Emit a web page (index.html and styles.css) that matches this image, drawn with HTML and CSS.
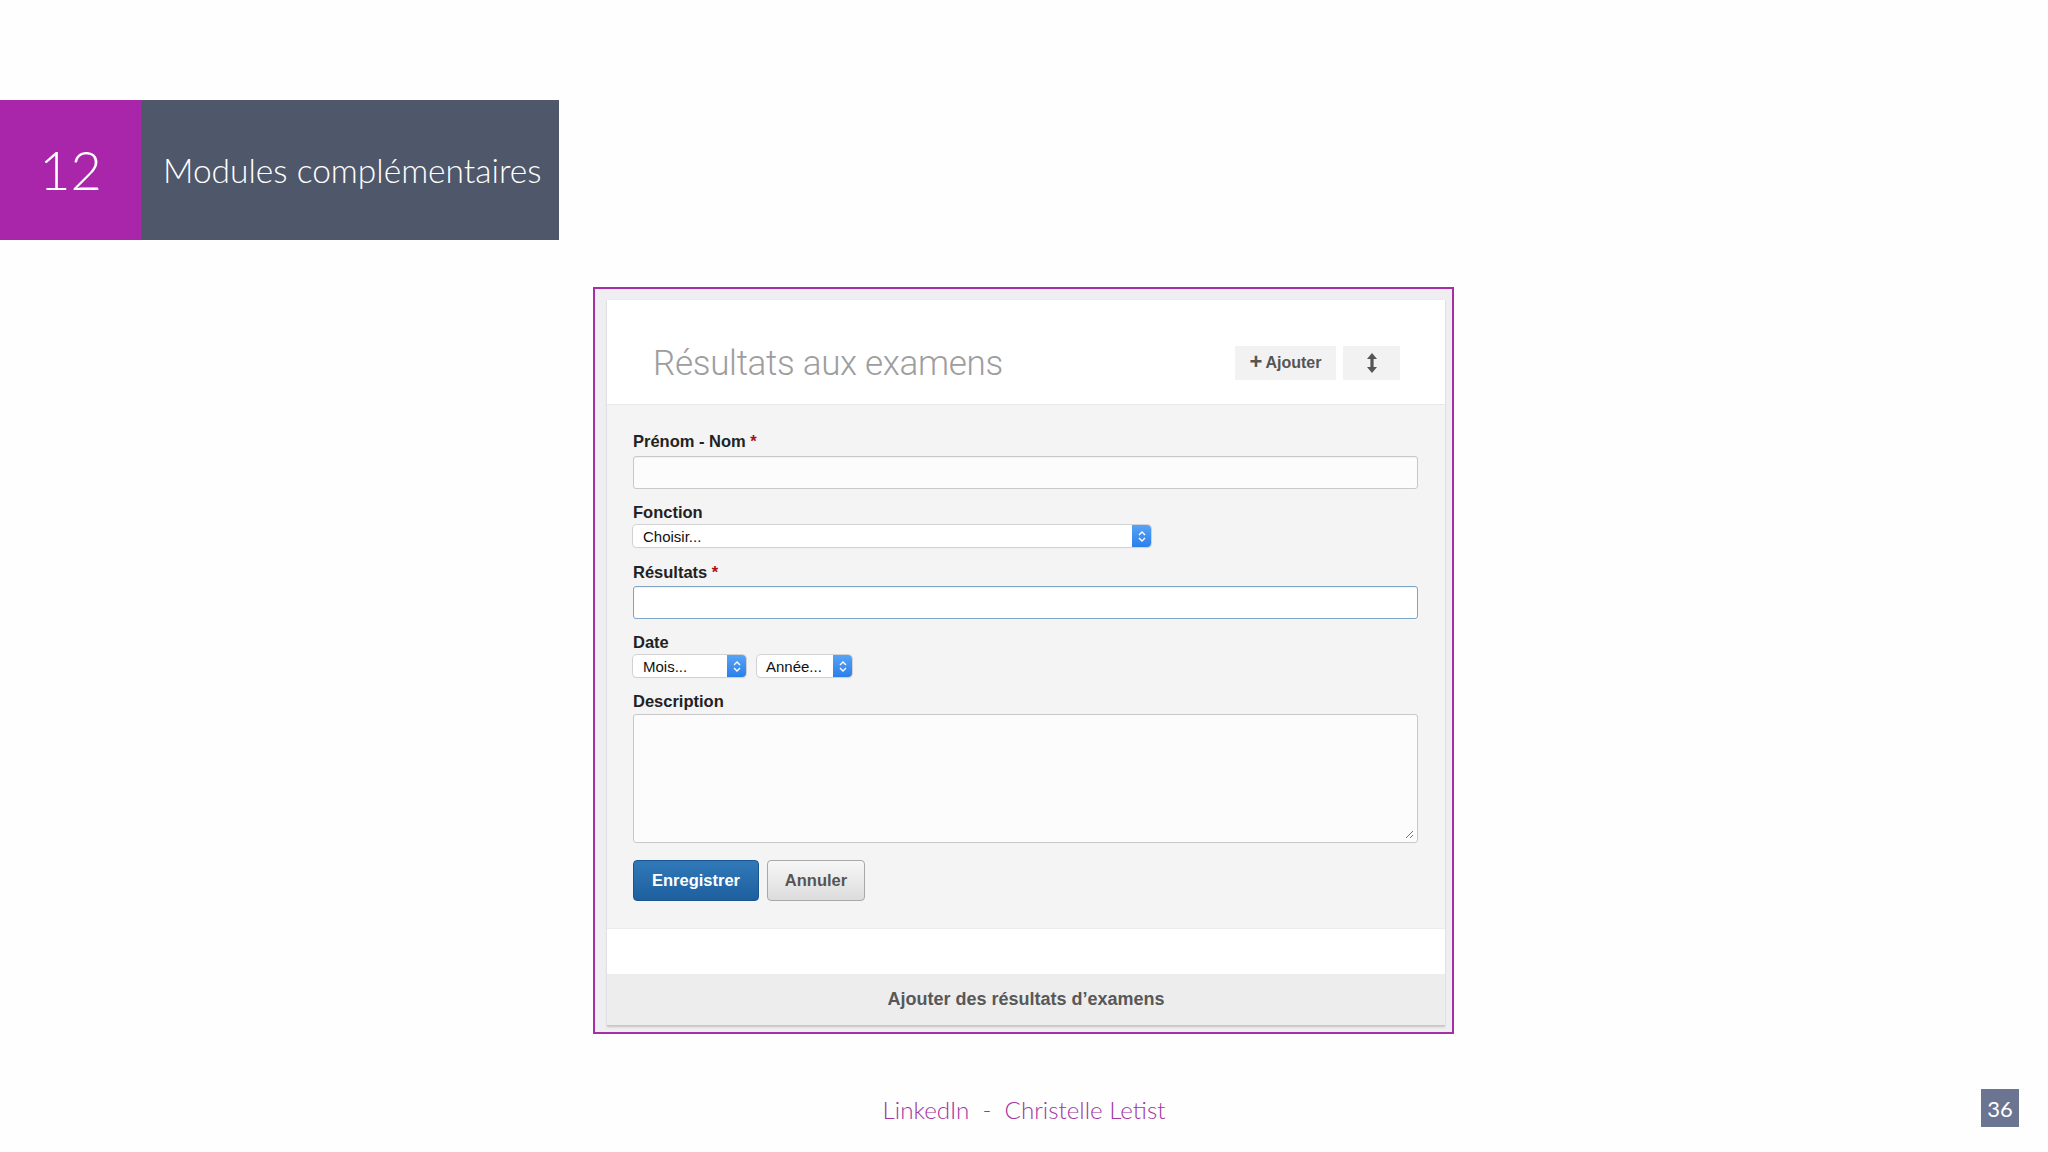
FILE: index.html
```html
<!DOCTYPE html>
<html lang="fr">
<head>
<meta charset="utf-8">
<title>Modules complémentaires</title>
<link rel="stylesheet" href="styles.css">
</head>
<body>
<div class="slide">
  <header class="banner">
    <div class="banner-num">12</div>
    <div class="banner-title">Modules complémentaires</div>
  </header>

  <section class="frame">
    <div class="card">
      <div class="card-head">
        <h2 class="card-title">Résultats aux examens</h2>
        <div class="head-actions">
          <button class="tool-btn add-btn"><span class="plus">+</span>Ajouter</button>
          <button class="tool-btn sort-btn" aria-label="Réorganiser">
            <svg width="12" height="20" viewBox="0 0 12 20"><path d="M6 0 L11 6 H7.6 V14 H11 L6 20 L1 14 H4.4 V6 H1 Z" fill="#555"/></svg>
          </button>
        </div>
      </div>

      <form class="card-form">
        <label class="lbl">Prénom - Nom <span class="req">*</span></label>
        <div class="input"></div>

        <label class="lbl lbl-gap">Fonction</label>
        <div class="select select-wide">
          <span class="select-text">Choisir...</span>
          <span class="select-arrow">
            <svg width="8" height="13" viewBox="0 0 8 13"><path d="M1 5 L4 2 L7 5 M1 8 L4 11 L7 8" fill="none" stroke="#fff" stroke-width="1.4"/></svg>
          </span>
        </div>

        <label class="lbl lbl-gap2">Résultats <span class="req">*</span></label>
        <div class="input input-focus"></div>

        <label class="lbl lbl-gap">Date</label>
        <div class="date-row">
          <div class="select select-mois">
            <span class="select-text">Mois...</span>
            <span class="select-arrow">
              <svg width="8" height="13" viewBox="0 0 8 13"><path d="M1 5 L4 2 L7 5 M1 8 L4 11 L7 8" fill="none" stroke="#fff" stroke-width="1.4"/></svg>
            </span>
          </div>
          <div class="select select-annee">
            <span class="select-text">Année...</span>
            <span class="select-arrow">
              <svg width="8" height="13" viewBox="0 0 8 13"><path d="M1 5 L4 2 L7 5 M1 8 L4 11 L7 8" fill="none" stroke="#fff" stroke-width="1.4"/></svg>
            </span>
          </div>
        </div>

        <label class="lbl lbl-gap3">Description</label>
        <div class="textarea">
          <svg class="grip" width="9" height="9" viewBox="0 0 9 9"><path d="M8 1 L1 8 M8 5 L5 8" stroke="#777" stroke-width="1"/></svg>
        </div>

        <div class="actions">
          <button type="button" class="btn btn-primary">Enregistrer</button>
          <button type="button" class="btn btn-secondary">Annuler</button>
        </div>
      </form>

      <div class="card-spacer"></div>
      <div class="card-foot">Ajouter des résultats d’examens</div>
    </div>
  </section>

  <footer class="slide-foot">
    <div></div>
    <div class="credit">LinkedIn&nbsp; - &nbsp;Christelle Letist</div>
    <div class="page-num">36</div>
  </footer>
</div>
</body>
</html>
```

FILE: styles.css
```css
* { box-sizing: border-box; }

html, body {
  margin: 0;
  padding: 0;
  background: #fefefe;
}

.slide {
  width: 2048px;
  height: 1152px;
  overflow: hidden;
  font-family: "Liberation Sans", Arial, sans-serif;
}

/* Banner */
.banner {
  display: flex;
  margin-top: 100px;
  height: 140px;
  width: 559px;
}

.banner-num {
  width: 141px;
  background: #a925a9;
  color: #fff;
  font-family: Lato, "Noto Sans", sans-serif;
  font-weight: 300;
  font-size: 54px;
  display: flex;
  align-items: center;
  justify-content: center;
  padding-bottom: 2px;
}

.banner-title {
  flex: 1;
  background: #4f576a;
  color: #fff;
  font-family: Lato, "Noto Sans", sans-serif;
  font-weight: 300;
  font-size: 33.5px;
  display: flex;
  align-items: center;
  padding-left: 22px;
}

/* Frame */
.frame {
  margin-top: 47px;
  margin-left: 593px;
  width: 861px;
  height: 747px;
  border: 2px solid #a62fa8;
  background: #efeff1;
  padding: 11px 7px 7px 12px;
}

.card {
  width: 838px;
  background: #fff;
  box-shadow: 0 1px 2px rgba(0,0,0,0.18);
}

.card-head {
  height: 105px;
  display: flex;
  align-items: center;
  justify-content: space-between;
  padding: 22px 45px 0 46px;
  border-bottom: 1px solid #e9e9eb;
}

.card-title {
  margin: 0;
  font-family: Roboto, "Liberation Sans", sans-serif;
  font-weight: 300;
  font-size: 35px;
  color: #9d9d9f;
  letter-spacing: -0.3px;
}

.head-actions {
  display: flex;
  gap: 7px;
}

.tool-btn {
  height: 34px;
  border: none;
  background: #f2f2f3;
  color: #555;
  font-family: "Liberation Sans", Arial, sans-serif;
  font-weight: bold;
  font-size: 16px;
  display: flex;
  align-items: center;
  justify-content: center;
  padding: 0;
}

.add-btn {
  width: 101px;
  gap: 3px;
}

.plus {
  font-size: 22px;
  line-height: 1;
  margin-top: -2px;
}

.sort-btn {
  width: 57px;
}

/* Form */
.card-form {
  background: #f4f4f5;
  padding: 26px 27px 27px 26px;
  display: flex;
  flex-direction: column;
}

.lbl {
  font-size: 16.5px;
  font-weight: bold;
  color: #222;
  line-height: 20px;
  height: 20px;
}

.req { color: #a11; }

.lbl-gap { margin-top: 13px; }
.lbl-gap2 { margin-top: 15px; }
.lbl-gap3 { margin-top: 14px; }

.input {
  margin-top: 5px;
  height: 33px;
  background: #fcfcfd;
  border: 1px solid #c8c8ca;
  border-radius: 3px;
  box-shadow: inset 0 1px 1px rgba(0,0,0,0.05);
}

.input-focus {
  margin-top: 4px;
  background: #fff;
  border: 1.5px solid #7fa4c6;
}

.select {
  margin-top: 3px;
  height: 22px;
  background: #fff;
  border-radius: 4px;
  box-shadow: 0 0 0 1px #d2d2d4, 0 1px 1px rgba(0,0,0,0.15);
  display: flex;
  align-items: center;
  overflow: hidden;
}

.select-text {
  flex: 1;
  font-size: 15px;
  color: #111;
  padding-left: 10px;
}

.select-arrow {
  width: 19px;
  align-self: stretch;
  background: linear-gradient(#58a3f7, #2a7fe9);
  display: flex;
  align-items: center;
  justify-content: center;
}

.select-wide { width: 518px; }

.date-row {
  display: flex;
  gap: 11px;
}

.select-mois { width: 113px; }
.select-annee { width: 95px; }
.select-annee .select-text { padding-left: 9px; }

.textarea {
  margin-top: 3px;
  height: 129px;
  background: #fcfcfd;
  border: 1px solid #c8c8ca;
  border-radius: 3px;
  display: flex;
  align-items: flex-end;
  justify-content: flex-end;
  padding: 0 3px 3px 0;
}

.actions {
  margin-top: 17px;
  display: flex;
  gap: 8px;
}

.btn {
  height: 41px;
  border-radius: 4px;
  font-family: "Liberation Sans", Arial, sans-serif;
  font-weight: bold;
  font-size: 16.5px;
  padding: 0;
}

.btn-primary {
  width: 126px;
  color: #fff;
  background: linear-gradient(#3079b8, #1e5f9f);
  border: 1px solid #1b5590;
}

.btn-secondary {
  width: 98px;
  color: #555;
  background: linear-gradient(#f7f7f7, #dcdcdd);
  border: 1px solid #a9a9ab;
}

.card-spacer {
  height: 46px;
  background: #fff;
  border-top: 1px solid #ececee;
}

.card-foot {
  height: 52px;
  background: #ededee;
  border-bottom: 1px solid #c6c6c8;
  display: flex;
  align-items: center;
  justify-content: center;
  font-size: 18px;
  font-weight: bold;
  color: #585858;
}

/* Slide footer */
.slide-foot {
  margin-top: 55px;
  height: 38px;
  display: grid;
  grid-template-columns: 1fr auto 1fr;
  align-items: center;
}

.credit {
  font-family: Lato, "Noto Sans", sans-serif;
  font-weight: 300;
  font-size: 24.2px;
  color: #a234a3;
  padding-top: 2px;
}

.page-num {
  justify-self: end;
  margin-right: 29px;
  width: 38px;
  height: 38px;
  background: #6b7592;
  color: #fff;
  font-family: Lato, "Noto Sans", sans-serif;
  font-weight: 400;
  font-size: 22px;
  display: flex;
  align-items: center;
  justify-content: center;
}
```
